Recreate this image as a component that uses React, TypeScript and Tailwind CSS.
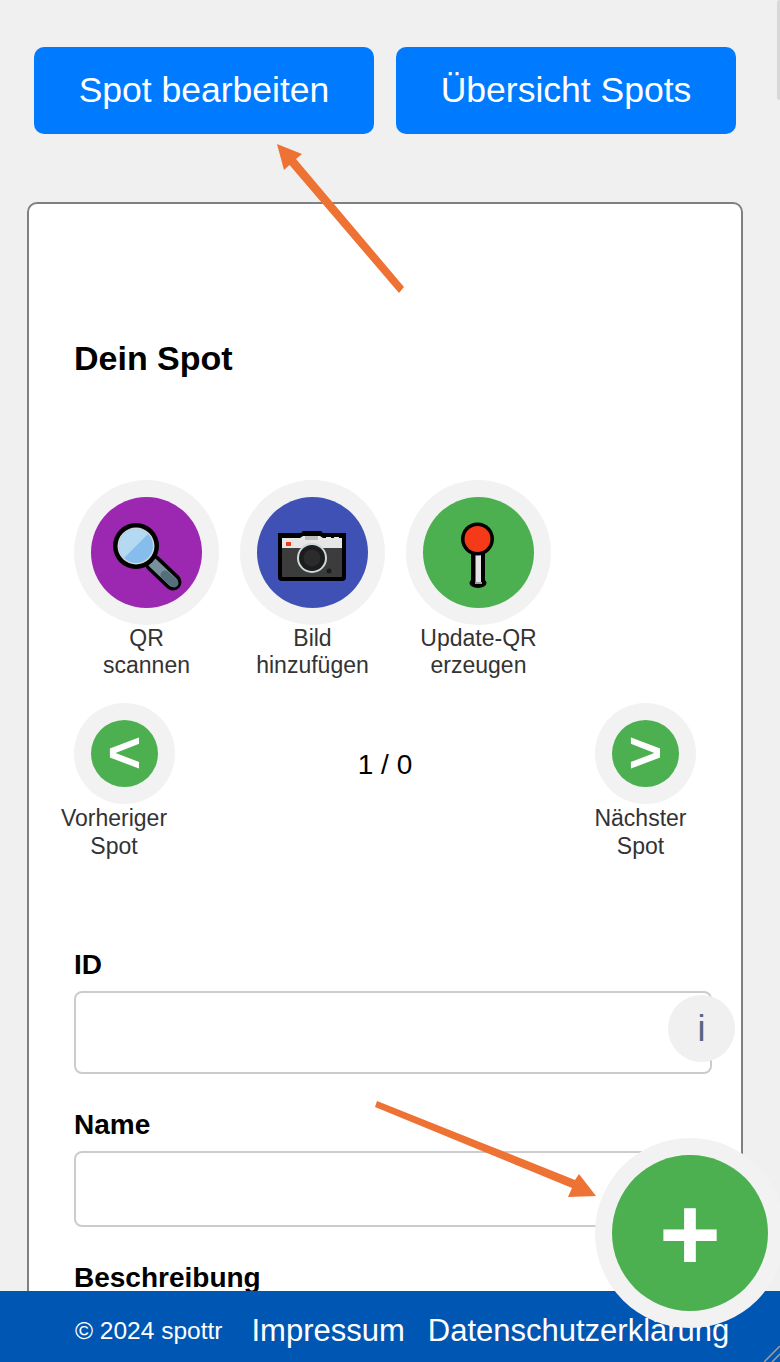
import type { ReactNode } from 'react';

function MagnifierIcon() {
  return (
    <svg className="w-[111px] h-[111px]" viewBox="0 0 111 111">
      <line x1="62" y1="66" x2="82" y2="85" stroke="#000" strokeWidth="17" strokeLinecap="round" />
      <line x1="62" y1="66" x2="82" y2="85" stroke="#78909c" strokeWidth="10" strokeLinecap="round" />
      <line x1="74" y1="78" x2="83" y2="86" stroke="#546e7a" strokeWidth="9" strokeLinecap="round" />
      <circle cx="45" cy="49" r="23" fill="#000" />
      <circle cx="45" cy="49" r="18.500" fill="#cfd8dc" />
      <circle cx="45" cy="49" r="17" fill="#87bdec" />
      <path d="M33 37 A17 17 0 0 1 57 37 L33 61 A17 17 0 0 1 33 37 Z" fill="#b3daf2" />
    </svg>
  );
}

function CameraIcon() {
  return (
    <svg className="w-[111px] h-[111px]" viewBox="0 0 111 111">
      <path d="M21 36 H44 L46 34 H64 L66 36 H89 V80 A4 4 0 0 1 85 84 H25 A4 4 0 0 1 21 80 Z" fill="#000" />
      <rect x="25" y="51" width="60" height="29" fill="#3c3c3c" />
      <path d="M25 41 H43 L46 39 H63 L66 41 H69 V40 H74 V41 H77 V40 H82 V41 H85 V51 H25 Z" fill="#e6e6e6" />
      <rect x="48" y="39" width="13" height="4" fill="#bdbdbd" />
      <rect x="29" y="45" width="5" height="4" fill="#f4381a" />
      <circle cx="55" cy="61" r="15" fill="#cfd8dc" />
      <circle cx="55" cy="61" r="13" fill="#1c1c1c" />
      <circle cx="55" cy="61" r="8.500" fill="#2b2b2b" />
      <circle cx="72" cy="74" r="2.500" fill="#1c1c1c" />
    </svg>
  );
}

function PinIcon() {
  return (
    <svg className="w-[111px] h-[111px]" viewBox="0 0 111 111">
      <ellipse cx="55" cy="86" rx="8.500" ry="5" fill="#000" />
      <rect x="48" y="50" width="14" height="36" fill="#000" />
      <rect x="52.500" y="54" width="5.500" height="32" fill="#e4e4e4" />
      <rect x="52" y="85" width="7" height="2" fill="#9e9e9e" />
      <circle cx="54.500" cy="42" r="16.500" fill="#000" />
      <circle cx="54.500" cy="42" r="13" fill="#f43a18" />
    </svg>
  );
}

function ActionButton({ color, icon, lines }: { color: string; icon: ReactNode; lines: string[] }) {
  return (
    <div className="w-[145px] flex flex-col items-center">
      <div className="w-[145px] h-[145px] rounded-full bg-[#f2f2f2] flex items-center justify-center">
        <div className={`w-[111px] h-[111px] rounded-full flex items-center justify-center ${color}`}>{icon}</div>
      </div>
      <div className="text-[23px] leading-[27px] text-[#333] text-center whitespace-nowrap">
        {lines.map((line) => (
          <div key={line}>{line}</div>
        ))}
      </div>
    </div>
  );
}

function NavButton({ glyph }: { glyph: string }) {
  return (
    <div className="w-[101px] h-[101px] rounded-full bg-[#f2f2f2] flex items-center justify-center">
      <div className="w-[67px] h-[67px] rounded-full bg-[#4caf50] flex items-center justify-center text-white font-bold text-[58px] leading-none pb-[4px]">
        {glyph}
      </div>
    </div>
  );
}

export default function App() {
  return (
    <div className="relative h-[1362px] overflow-hidden bg-[#f0f0f0] font-['Liberation_Sans',Arial,sans-serif]">
      {/* Scrollbar thumb */}
      <div className="absolute top-0 right-0 w-[3px] h-[100px] bg-[#d8d8d8] rounded-l" />

      {/* Top buttons */}
      <div className="flex gap-[22px] pl-[34px] pt-[47px]">
        <button className="w-[340px] h-[87px] rounded-[10px] bg-[#007bff] text-white text-[35.500px]">Spot bearbeiten</button>
        <button className="w-[340px] h-[87px] rounded-[10px] bg-[#007bff] text-white text-[35.500px]">Übersicht Spots</button>
      </div>

      {/* Card */}
      <div className="ml-[27px] mt-[68px] w-[716px] h-[1300px] border-2 border-[#808080] rounded-[10px] bg-white pl-[45px] pr-[29px]">
        <h2 className="mt-[134px] text-[34px] leading-[40px] font-bold text-black">Dein Spot</h2>

        <div className="flex gap-[21px] mt-[102px]">
          <ActionButton color="bg-[#9c27b0]" icon={<MagnifierIcon />} lines={['QR', 'scannen']} />
          <ActionButton color="bg-[#3f51b5]" icon={<CameraIcon />} lines={['Bild', 'hinzufügen']} />
          <ActionButton color="bg-[#4caf50]" icon={<PinIcon />} lines={['Update-QR', 'erzeugen']} />
        </div>

        <div className="flex justify-between mt-[24px] w-[622px]">
          <div className="w-[101px] flex flex-col items-center">
            <NavButton glyph="<" />
            <div className="-ml-[21px] text-[23px] leading-[28px] text-[#333] text-center whitespace-nowrap">
              Vorheriger
              <br />
              Spot
            </div>
          </div>
          <div className="pt-[44px] text-[28px] leading-[36px] text-black">1 / 0</div>
          <div className="w-[101px] flex flex-col items-center">
            <NavButton glyph=">" />
            <div className="-ml-[10px] text-[23px] leading-[28px] text-[#333] text-center whitespace-nowrap">
              Nächster
              <br />
              Spot
            </div>
          </div>
        </div>

        <label className="block mt-[89px] text-[28px] leading-[32px] font-bold text-black">ID</label>
        <div className="relative mt-[10px] w-[638px]">
          <input className="block w-full h-[83px] border-2 border-[#ccc] rounded-[8px] bg-white" />
          <div className="absolute top-[4px] right-[-23px] w-[67px] h-[67px] rounded-full bg-[#f0f0f0] flex items-center justify-center text-[36px] text-[#556680]">
            i
          </div>
        </div>

        <label className="block mt-[35px] text-[28px] leading-[32px] font-bold text-black">Name</label>
        <input className="block mt-[10px] w-[638px] h-[76px] border-2 border-[#ccc] rounded-[8px] bg-white" />

        <label className="block mt-[35px] text-[28px] leading-[32px] font-bold text-black">Beschreibung</label>
        <textarea className="block mt-[10px] w-[638px] h-[150px] border-2 border-[#ccc] rounded-[8px] bg-white" />
      </div>

      {/* Footer */}
      <footer className="fixed bottom-0 left-0 right-0 h-[71px] bg-[#0056b3] text-white flex items-center pl-[75px] pt-[10px]">
        <span className="text-[24.500px] mr-[29px]">© 2024 spottr</span>
        <a className="text-[31px] mr-[23px]">Impressum</a>
        <a className="text-[31px] whitespace-nowrap">Datenschutzerklärung</a>
        <svg className="absolute right-0 bottom-0 w-[16px] h-[16px]" viewBox="0 0 16 16">
          <path d="M0 16 L16 0 M8 16 L16 8" stroke="#a0a0a0" strokeWidth="1.500" />
        </svg>
      </footer>

      {/* Add button */}
      <div className="fixed left-[595px] top-[1138px] w-[190px] h-[190px] rounded-full bg-[#f2f2f2] flex items-center justify-center">
        <div className="w-[156px] h-[156px] rounded-full bg-[#4caf50] flex items-center justify-center text-white font-bold text-[106px] leading-none">
          +
        </div>
      </div>

      {/* Annotation arrows */}
      <svg className="fixed inset-0 w-[780px] h-[1362px] pointer-events-none" viewBox="0 0 780 1362">
        <polygon points="277,144 302,154 296,159 404,287 399,293 289.500,165 284,170" fill="#ed7233" />
        <polygon points="596,1196 568,1197 572,1188 375,1107 377,1101 575,1180 579,1174" fill="#ed7233" />
      </svg>
    </div>
  );
}
